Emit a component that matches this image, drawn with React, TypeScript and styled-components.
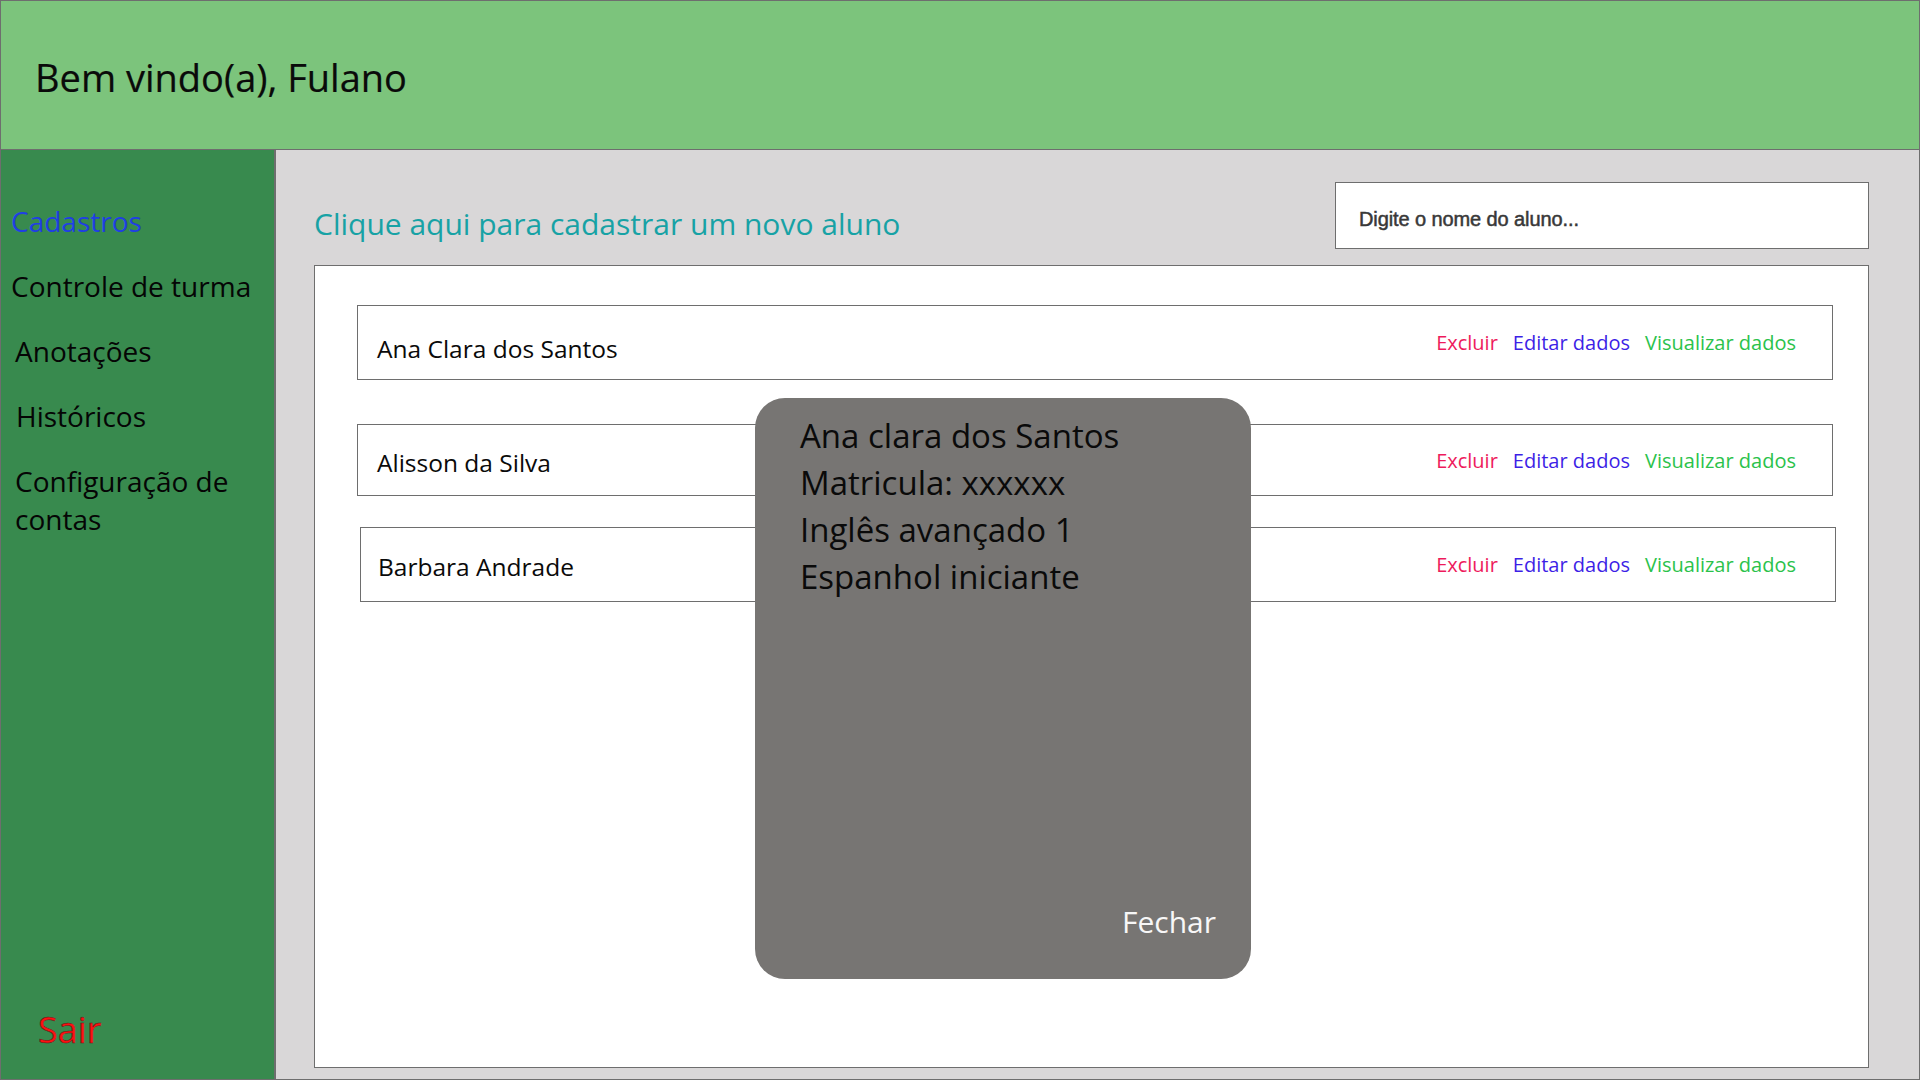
import React from "react";
import styled, { createGlobalStyle } from "styled-components";

const GlobalStyle = createGlobalStyle`
  html, body {
    margin: 0;
    padding: 0;
    width: 1920px;
    height: 1080px;
    overflow: hidden;
    background: #d9d7d8;
    font-family: "Open Sans", "Noto Sans", sans-serif;
  }
  * { box-sizing: border-box; }
`;

const Frame = styled.div`
  position: relative;
  width: 1920px;
  height: 1080px;
  border: 1px solid #6e6e6e;
  display: grid;
  grid-template-rows: 149px 1fr;
  grid-template-columns: 275px 1fr;
  grid-template-areas:
    "header header"
    "side main";
`;

const Header = styled.header`
  grid-area: header;
  background: #7cc47c;
  border-bottom: 1px solid #6e6e6e;
  display: flex;
  align-items: center;
  padding: 4px 0 0 34px;
`;

const Title = styled.h1`
  margin: 0;
  font-family: "Open Sans", sans-serif;
  font-weight: 400;
  font-size: 38px;
  color: #0a0a0a;
  -webkit-text-stroke: 0.2px #0a0a0a;
`;

const Sidebar = styled.nav`
  grid-area: side;
  background: #388a4e;
  border-right: 2px solid #6e6e6e;
  display: flex;
  flex-direction: column;
  padding: 52px 8px 25px 10px;
`;

const NavList = styled.ul`
  list-style: none;
  margin: 0;
  padding: 0;
  display: flex;
  flex-direction: column;
  gap: 27px;
`;

const NavItem = styled.li<{ $active?: boolean; $indent?: number }>`
  font-family: "Open Sans", sans-serif;
  font-size: 28px;
  line-height: 38px;
  color: ${(p) => (p.$active ? "#1f3fe4" : "#050505")};
  padding-left: ${(p) => p.$indent ?? 0}px;
  cursor: pointer;
`;

const Logout = styled.div`
  margin-top: auto;
  padding-left: 27px;
  font-family: "Open Sans", sans-serif;
  font-size: 36px;
  color: #ff1010;
  -webkit-text-stroke: 0.5px #5a1c1c;
  cursor: pointer;
`;

const Main = styled.main`
  grid-area: main;
  background: #d9d7d8;
  display: flex;
  flex-direction: column;
  padding: 32px 50px 11px 38px;
  min-height: 0;
`;

const TopBar = styled.div`
  display: flex;
  justify-content: space-between;
  align-items: flex-end;
`;

const NewStudentLink = styled.a`
  font-family: "Open Sans", sans-serif;
  font-size: 30px;
  color: #17a2a5;
  text-decoration: none;
  margin-bottom: 5px;
  cursor: pointer;
`;

const SearchInput = styled.input`
  width: 534px;
  height: 67px;
  border: 1px solid #6e6e6e;
  background: #ffffff;
  padding: 8px 0 0 23px;
  font-family: "Liberation Sans", Arial, sans-serif;
  font-size: 20px;
  color: #333;
  outline: none;
  &::placeholder {
    color: #383838;
    -webkit-text-stroke: 0.5px #383838;
    letter-spacing: -0.1px;
  }
`;

const Panel = styled.section`
  flex: 1;
  margin-top: 16px;
  background: #ffffff;
  border: 1px solid #6e6e6e;
  padding: 39px 35px 0 42px;
  display: flex;
  flex-direction: column;
`;

const Row = styled.div<{ $height: number; $gapTop: number; $shift?: number }>`
  height: ${(p) => p.$height}px;
  margin-top: ${(p) => p.$gapTop}px;
  margin-left: ${(p) => p.$shift ?? 0}px;
  margin-right: ${(p) => -(p.$shift ?? 0)}px;
  border: 1px solid #6e6e6e;
  display: flex;
  align-items: center;
  justify-content: space-between;
  padding: 0 ${(p) => 36 + (p.$shift ?? 0)}px 0 ${(p) => 19 - (p.$shift ?? 0) + (p.$shift ? 1 : 0)}px;
`;

const Name = styled.span<{ $drop: number }>`
  font-family: "Open Sans", sans-serif;
  font-size: 24.5px;
  color: #0a0a0a;
  padding-top: ${(p) => p.$drop}px;
`;

const Actions = styled.div`
  display: flex;
  align-items: center;
  gap: 15px;
`;

const Action = styled.a<{ $color: string }>`
  font-family: "Open Sans", sans-serif;
  font-size: 20px;
  color: ${(p) => p.$color};
  text-decoration: none;
  cursor: pointer;
`;

const Dialog = styled.div`
  position: absolute;
  left: 754px;
  top: 397px;
  width: 496px;
  height: 581px;
  background: #777573;
  border-radius: 30px;
  display: flex;
  flex-direction: column;
  padding: 14px 35px 37px 45px;
`;

const DialogLine = styled.p`
  margin: 0;
  font-family: "Open Sans", sans-serif;
  font-size: 33px;
  line-height: 47px;
  color: #0a0a0a;
`;

const CloseButton = styled.button`
  margin-top: auto;
  align-self: flex-end;
  background: none;
  border: none;
  padding: 0;
  font-family: "Open Sans", sans-serif;
  font-size: 30px;
  color: #f7f7f7;
  cursor: pointer;
`;

const students = [
  { name: "Ana Clara dos Santos", height: 75, gapTop: 0, drop: 12, shift: 0 },
  { name: "Alisson da Silva", height: 72, gapTop: 44, drop: 4, shift: 0 },
  { name: "Barbara Andrade", height: 75, gapTop: 31, drop: 4, shift: 3 },
];

const navItems = [
  { label: "Cadastros", active: true, indent: 0 },
  { label: "Controle de turma", indent: 0 },
  { label: "Anotações", indent: 4 },
  { label: "Históricos", indent: 5 },
  { label: "Configuração de contas", indent: 4 },
];

export default function App() {
  return (
    <>
      <GlobalStyle />
      <Frame>
        <Header>
          <Title>Bem vindo(a), Fulano</Title>
        </Header>
        <Sidebar>
          <NavList>
            {navItems.map((item) => (
              <NavItem key={item.label} $active={item.active} $indent={item.indent}>
                {item.label}
              </NavItem>
            ))}
          </NavList>
          <Logout>Sair</Logout>
        </Sidebar>
        <Main>
          <TopBar>
            <NewStudentLink>Clique aqui para cadastrar um novo aluno</NewStudentLink>
            <SearchInput placeholder="Digite o nome do aluno..." />
          </TopBar>
          <Panel>
            {students.map((s) => (
              <Row key={s.name} $height={s.height} $gapTop={s.gapTop} $shift={s.shift}>
                <Name $drop={s.drop}>{s.name}</Name>
                <Actions>
                  <Action $color="#ee1a5c">Excluir</Action>
                  <Action $color="#3d1fe6">Editar dados</Action>
                  <Action $color="#2bc24b">Visualizar dados</Action>
                </Actions>
              </Row>
            ))}
          </Panel>
        </Main>
        <Dialog>
          <DialogLine>Ana clara dos Santos</DialogLine>
          <DialogLine>Matricula: xxxxxx</DialogLine>
          <DialogLine>Inglês avançado 1</DialogLine>
          <DialogLine>Espanhol iniciante</DialogLine>
          <CloseButton>Fechar</CloseButton>
        </Dialog>
      </Frame>
    </>
  );
}
